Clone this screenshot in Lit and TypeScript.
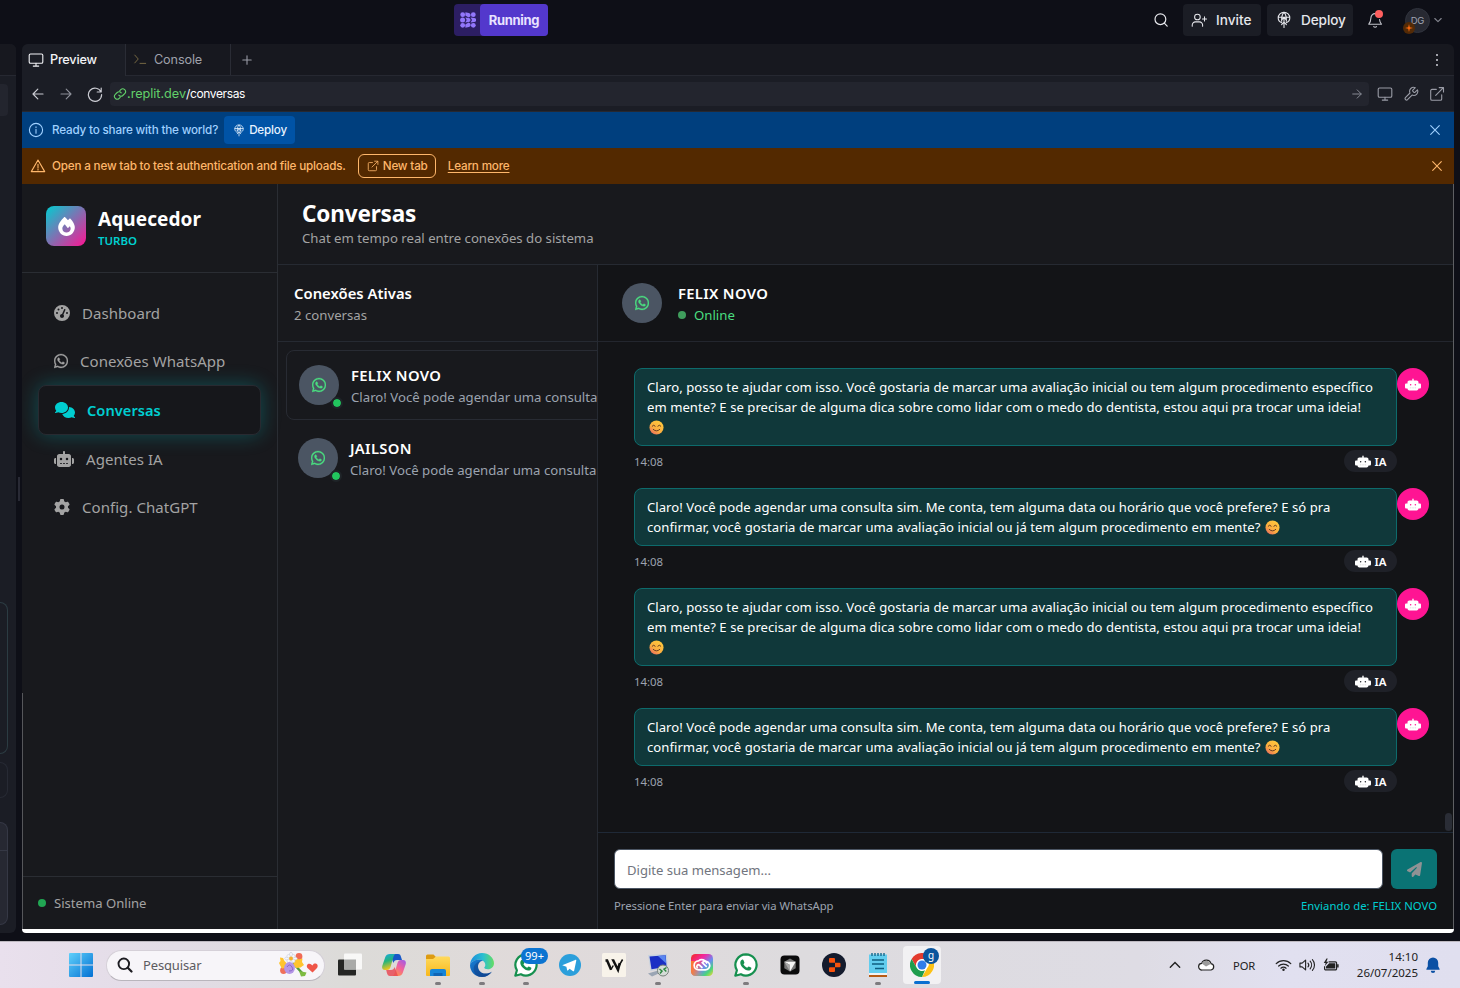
import { LitElement, html, svg, css, nothing } from "lit";
import { customElement, property } from "lit/decorators.js";

type Glyph = { box: string; body: unknown; line?: boolean };

const WHATSAPP = svg`<path stroke="currentColor" stroke-width="10" d="M380.9 97.1C339 55.1 283.2 32 223.9 32c-122.4 0-222 99.6-222 222 0 39.1 10.2 77.3 29.6 111L0 480l117.7-30.9c32.4 17.7 68.9 27 106.1 27h.1c122.3 0 224.1-99.6 224.1-222 0-59.3-25.2-115-67.1-157zm-157 341.6c-33.2 0-65.7-8.9-94-25.7l-6.7-4-69.8 18.3L72 359.2l-4.4-7c-18.5-29.4-28.2-63.3-28.2-98.2 0-101.7 82.8-184.5 184.6-184.5 49.3 0 95.6 19.2 130.4 54.1 34.8 34.9 56.2 81.2 56.1 130.5 0 101.8-84.9 184.6-186.6 184.6zm101.2-138.2c-5.5-2.8-32.8-16.2-37.9-18-5.1-1.9-8.8-2.8-12.5 2.8-3.7 5.6-14.3 18-17.6 21.8-3.2 3.7-6.5 4.2-12 1.4-32.6-16.3-54-29.1-75.5-66-5.7-9.8 5.7-9.1 16.3-30.3 1.8-3.7.9-6.9-.5-9.7-1.4-2.8-12.5-30.1-17.1-41.2-4.5-10.8-9.1-9.3-12.5-9.5-3.2-.2-6.9-.2-10.6-.2-3.7 0-9.7 1.4-14.8 6.9-5.1 5.6-19.4 19-19.4 46.3 0 27.3 19.9 53.7 22.6 57.4 2.8 3.7 39.1 59.7 94.8 83.8 35.2 15.2 49 16.5 66.6 13.9 10.7-1.6 32.8-13.4 37.4-26.4 4.6-13 4.6-24.1 3.2-26.4-1.3-2.5-5-3.9-10.5-6.6z"/>`;

const WA_TASK = svg`<path fill="#fff" d="M12 1.5A10.4 10.4 0 0 0 3 17.2L1.5 22.5 7 21A10.4 10.4 0 1 0 12 1.5z"/><path fill="none" stroke="#16904f" stroke-width="2.2" stroke-linejoin="round" d="M12 1.3A10.6 10.6 0 0 0 2.900 17.300L1.300 22.700 6.900 21.200A10.600 10.600 0 1 0 12 1.300z"/><path fill="#16904f" d="M8.4 6.600c.6 0 .9.1 1.200.8l.8 2c.2.6-.8 1.500-1 1.900.8 1.500 2 2.700 3.700 3.400.5-.3 1.200-1.500 1.700-1.300l2.200 1.100c.5.300.4.900.2 1.500-.5 1.200-1.900 1.700-3 1.600-3.700-.5-7.700-4.300-7.900-7.600 0-1.300.7-3.200 2.100-3.400z"/>`;

const GLYPHS: Record<string, Glyph> = {
  fire: { box: "0 0 448 512", body: svg`<path d="M159.3 5.4c7.8-7.3 19.9-7.2 27.7 .1c27.6 25.9 53.5 53.8 77.7 84c11-14.4 23.5-30.1 37-42.9c7.9-7.4 20.1-7.4 28 .1c34.6 33 63.9 76.6 84.5 118c20.3 40.8 33.8 82.5 33.8 111.9C448 404.2 348.2 512 224 512C98.4 512 0 404.1 0 276.5c0-38.4 17.8-85.3 45.4-131.7C73.3 97.7 112.7 48.6 159.3 5.4zM225.7 416c25.3 0 47.7-7 68.8-21c42.1-29.4 53.4-88.2 28.1-134.4c-4.5-9-16-9.6-22.5-2l-25.2 29.3c-6.6 7.6-18.5 7.4-24.7-.5c-16.5-21-46-58.5-62.8-79.8c-6.3-8-18.3-8.1-24.7-.1c-33.8 42.5-50.8 69.3-50.8 99.4C112 375.4 162.6 416 225.7 416z"/>` },
  gauge: { box: "0 0 512 512", body: svg`<path d="M0 256a256 256 0 1 1 512 0A256 256 0 1 1 0 256zM288 96a32 32 0 1 0 -64 0 32 32 0 1 0 64 0zM256 416c35.3 0 64-28.7 64-64c0-17.4-6.9-33.1-18.1-44.6L366 161.7c5.3-12.1-.2-26.3-12.3-31.6s-26.3 .2-31.6 12.3L257.9 288c-.6 0-1.3 0-1.9 0c-35.3 0-64 28.7-64 64s28.7 64 64 64zM176 144a32 32 0 1 0 -64 0 32 32 0 1 0 64 0zM96 288a32 32 0 1 0 0-64 32 32 0 1 0 0 64zm352-32a32 32 0 1 0 -64 0 32 32 0 1 0 64 0z"/>` },
  whatsapp: { box: "0 0 448 512", body: WHATSAPP },
  comments: { box: "0 0 640 512", body: svg`<path d="M208 352c114.9 0 208-78.8 208-176S322.9 0 208 0S0 78.8 0 176c0 38.6 14.7 74.3 39.6 103.4c-3.5 9.4-8.7 17.7-14.2 24.7c-4.8 6.2-9.7 11-13.3 14.3c-1.8 1.6-3.3 2.9-4.3 3.7c-.5 .4-.9 .7-1.1 .8l-.2 .2 0 0 0 0C1 327.2-1.4 334.4 .8 340.9S9.1 352 16 352c21.8 0 43.8-5.6 62.1-12.5c9.2-3.5 17.8-7.4 25.3-11.4C134.1 343.3 169.8 352 208 352zM448 176c0 112.3-99.1 196.9-216.5 207C255.8 457.4 336.4 512 432 512c38.2 0 73.9-8.7 104.7-23.9c7.5 4 16 7.9 25.2 11.4c18.3 6.9 40.3 12.5 62.1 12.5c6.9 0 13.1-4.5 15.2-11.1c2.1-6.6-.2-13.8-5.8-17.9l0 0 0 0-.2-.2c-.2-.2-.6-.4-1.1-.8c-1-.8-2.5-2-4.3-3.7c-3.6-3.3-8.5-8.1-13.3-14.3c-5.5-7-10.7-15.4-14.2-24.7c24.9-29 39.6-64.7 39.6-103.4c0-92.8-84.9-168.9-192.6-175.5c.4 5.1 .6 10.3 .6 15.5z"/>` },
  robot: { box: "0 0 640 512", body: svg`<path d="M320 0c17.7 0 32 14.3 32 32l0 64 120 0c39.8 0 72 32.2 72 72l0 272c0 39.8-32.2 72-72 72l-304 0c-39.8 0-72-32.2-72-72l0-272c0-39.8 32.2-72 72-72l120 0 0-64c0-17.7 14.3-32 32-32zM208 384c-8.8 0-16 7.2-16 16s7.2 16 16 16l32 0c8.8 0 16-7.2 16-16s-7.2-16-16-16l-32 0zm96 0c-8.8 0-16 7.2-16 16s7.2 16 16 16l32 0c8.8 0 16-7.2 16-16s-7.2-16-16-16l-32 0zm96 0c-8.8 0-16 7.2-16 16s7.2 16 16 16l32 0c8.8 0 16-7.2 16-16s-7.2-16-16-16l-32 0zM264 256a40 40 0 1 0 -80 0 40 40 0 1 0 80 0zm152 40a40 40 0 1 0 0-80 40 40 0 1 0 0 80zM48 224l16 0 0 192-16 0c-26.5 0-48-21.5-48-48l0-96c0-26.5 21.5-48 48-48zm544 0c26.5 0 48 21.5 48 48l0 96c0 26.5-21.5 48-48 48l-16 0 0-192 16 0z"/>` },
  robotSmall: { box: "0 0 640 512", body: svg`<path d="M320 20c16 0 28 12 28 28v52h120c40 0 72 32 72 72v248c0 40-32 72-72 72H172c-40 0-72-32-72-72V172c0-40 32-72 72-72h120V48c0-16 12-28 28-28zM256 262a30 30 0 1 0-60 0 30 30 0 1 0 60 0zm158 30a30 30 0 1 0 0-60 30 30 0 1 0 0 60zM50 220h64v200H50c-28 0-50-22-50-50v-100c0-28 22-50 50-50zm540 0c28 0 50 22 50 50v100c0 28-22 50-50 50h-64V220z"/><path fill="#888" opacity=".35" d="M195 372h60v32h-60zM290 372h60v32h-60zM385 372h60v32h-60z"/>` },
  gear: { box: "0 0 512 512", body: svg`<path d="M495.9 166.6c3.2 8.7 .5 18.4-6.4 24.6l-43.3 39.4c1.1 8.3 1.7 16.8 1.7 25.4s-.6 17.1-1.7 25.4l43.3 39.4c6.9 6.2 9.6 15.9 6.4 24.6c-4.4 11.9-9.7 23.3-15.8 34.3l-4.7 8.1c-6.6 11-14 21.4-22.1 31.2c-5.9 7.2-15.7 9.6-24.5 6.8l-55.7-17.7c-13.4 10.3-28.2 18.9-44 25.4l-12.5 57.1c-2 9.1-9 16.3-18.2 17.8c-13.8 2.3-28 3.5-42.5 3.5s-28.7-1.2-42.5-3.5c-9.2-1.5-16.2-8.7-18.2-17.8l-12.5-57.1c-15.8-6.5-30.6-15.1-44-25.4L83.1 425.9c-8.8 2.8-18.6 .3-24.5-6.8c-8.1-9.8-15.5-20.2-22.1-31.2l-4.7-8.1c-6.1-11-11.4-22.4-15.8-34.3c-3.2-8.7-.5-18.4 6.4-24.6l43.3-39.4C64.6 273.1 64 264.6 64 256s.6-17.1 1.7-25.4L22.4 191.2c-6.9-6.2-9.6-15.9-6.4-24.6c4.4-11.9 9.7-23.3 15.8-34.3l4.7-8.1c6.6-11 14-21.4 22.1-31.2c5.9-7.2 15.7-9.6 24.5-6.8l55.7 17.7c13.4-10.3 28.2-18.9 44-25.4l12.5-57.1c2-9.1 9-16.3 18.2-17.8C227.3 1.2 241.5 0 256 0s28.7 1.2 42.5 3.5c9.2 1.5 16.2 8.7 18.2 17.8l12.5 57.1c15.8 6.5 30.6 15.1 44 25.4l55.7-17.7c8.8-2.8 18.6-.3 24.5 6.8c8.1 9.8 15.5 20.2 22.1 31.2l4.7 8.1c6.1 11 11.4 22.4 15.8 34.3zM256 336a80 80 0 1 0 0-160 80 80 0 1 0 0 160z"/>` },
  plane: { box: "0 0 512 512", body: svg`<path d="M498.1 5.6c10.1 7 15.4 19.1 13.5 31.2l-64 416c-1.5 9.7-7.4 18.2-16 23s-18.9 5.4-28 1.6L284 427.7l-68.5 74.1c-8.9 9.7-22.9 12.9-35.2 8.1S160 493.2 160 480l0-83.6c0-4 1.5-7.8 4.2-10.8L331.8 202.8c5.8-6.3 5.6-16-.4-22s-15.7-6.4-22-.7L106 360.8 17.7 316.6C7.1 311.3 .3 300.7 0 288.9s5.9-22.8 16.1-28.7l448-256c10.7-6.1 23.9-5.5 34 1.4z"/>` },
  search: { box: "0 0 16 16", line: true, body: svg`<circle cx="7.4" cy="7.2" r="5.4"/><path d="M11.3 11.2l2.9 2.9"/>` },
  invite: { box: "0 0 18 16", line: true, body: svg`<circle cx="6.8" cy="4.8" r="3"/><path d="M1.3 14.5v-1.2a3.3 3.3 0 0 1 3.3-3.3H9a3.3 3.3 0 0 1 3.3 3.3v1.2M14.3 4.7v4.4M12.1 6.9h4.4"/>` },
  rocket: { box: "0 0 16 18", line: true, body: svg`<path d="M5.7 11.8C3.4 10.8 2.2 9.1 2.2 7a5.8 5.8 0 0 1 11.6 0c0 2.1-1.2 3.8-3.5 4.8M5.7 10.2C5.4 6.8 6 3.5 8 1.4c2 2.1 2.6 5.4 2.3 8.800M8 6.200V16.500M5.500 9.200L8 6.400l2.500 2.800M5.600 13.600L8 11.200l2.400 2.400M2.400 6.200h11.200"/>` },
  bell: { box: "0 0 16 18", line: true, body: svg`<path d="M8.8 2.7C5.5 2.4 4 4.5 3.900 7c-.1 2.800-.6 4.300-2.100 6.200h12.600c-1.200-1.600-1.700-2.900-1.900-4.700M6.700 15.700c.7.800 2.100.8 2.800 0"/>` },
  chevDown: { box: "0 0 10 10", line: true, body: svg`<path d="M1.8 3.5L5 6.7l3.2-3.2"/>` },
  monitor: { box: "0 0 16 16", line: true, body: svg`<rect x="1.2" y="2" width="13.6" height="9.3" rx="1.3"/><path d="M8 11.3v2.7M5.3 14.1h5.4"/>` },
  prompt: { box: "0 0 16 16", line: true, body: svg`<path d="M2 3.500L6 8l-4 4.500M8 13h6.500"/>` },
  plus: { box: "0 0 12 12", line: true, body: svg`<path d="M6 1.8v8.4M1.8 6h8.4"/>` },
  dots: { box: "0 0 4 14", body: svg`<circle cx="2" cy="2" r="1.1"/><circle cx="2" cy="7" r="1.1"/><circle cx="2" cy="12" r="1.1"/>` },
  left: { box: "0 0 14 14", line: true, body: svg`<path d="M12 7H2.2M6.8 2.2L2 7l4.8 4.8"/>` },
  right: { box: "0 0 14 14", line: true, body: svg`<path d="M2 7h9.8M7.2 2.2L12 7l-4.8 4.8"/>` },
  reload: { box: "0 0 16 16", line: true, body: svg`<path d="M14.2 2v4h-4M14 6A6.6 6.6 0 1 0 14.6 8.6"/>` },
  link: { box: "0 0 14 14", line: true, body: svg`<path d="M5.8 8.2a2.7 2.7 0 0 0 4 .3l1.9-1.9a2.7 2.7 0 0 0-3.9-3.9l-1 1M8.2 5.8a2.7 2.7 0 0 0-4-.3L2.3 7.4a2.7 2.7 0 0 0 3.9 3.9l1-1"/>` },
  wrench: { box: "0 0 16 16", line: true, body: svg`<path d="M9.8 4.2a.7.7 0 0 0 0 1l1.1 1.1a.7.7 0 0 0 1 0l2.5-2.5a4 4 0 0 1-5.3 5.3l-4.6 4.6a1.5 1.5 0 0 1-2.1-2.1L7 7a4 4 0 0 1 5.3-5.3z"/>` },
  open: { box: "0 0 16 16", line: true, body: svg`<path d="M12.7 8.8v4.2a1.3 1.3 0 0 1-1.3 1.3H3a1.3 1.3 0 0 1-1.3-1.3V4.7A1.3 1.3 0 0 1 3 3.4h4.3M10.2 1.6h4.3v4.3M6.7 9.4l7.7-7.7"/>` },
  info: { box: "0 0 16 16", line: true, body: svg`<circle cx="8" cy="8" r="6.6"/><path d="M8 7.4v3.8M8 4.7v.7"/>` },
  warn: { box: "0 0 16 16", line: true, body: svg`<path d="M8 2L1.3 13.6h13.4zM8 6.2v3.7M8 11.3v.7"/>` },
  close: { box: "0 0 12 12", line: true, body: svg`<path d="M1.7 1.7l8.600 8.600M10.300 1.700l-8.600 8.600"/>` },
  spinner: { box: "0 0 16 16", body: svg`<circle cx="2.7" cy="2.7" r="2.4"/><circle cx="2.6" cy="8" r="2.500"/><circle cx="2.7" cy="13.3" r="2.4"/><path d="M5.400.3l3.400.6a2.300 2.300 0 0 1 1.100 3.900L8.600 5.600 5.300 3.400zM5.300 5.600l3.300.5A1.900 1.900 0 0 1 8.600 9.900l-3.300.5L6.700 8zM5.400 15.700l3.400-.6a2.300 2.300 0 0 0 1.100-3.900l-1.300-.8-3.300 2.200z"/><circle cx="13.3" cy="2.7" r="2.4"/><path d="M10.600 5.500l3.600.5a2 2 0 0 1 0 4l-3.600.5L12 8z"/><circle cx="13.300" cy="13.300" r="2.400"/>` },
  spark: { box: "0 0 12 12", body: svg`<circle cx="6" cy="6" r="6" fill="#532a06"/><path fill="#ff6a10" d="M6 2l.8 3.2L10 6l-3.200.8L6 10l-.8-3.200L2 6l3.200-.8z"/>` },
  smile: { box: "0 0 16 16", body: svg`<defs><linearGradient id="fc" x1=".8" y1=".1" x2=".2" y2=".95"><stop offset="0" stop-color="#ffc83c"/><stop offset=".6" stop-color="#fbae40"/><stop offset="1" stop-color="#e8705c"/></linearGradient></defs><circle cx="8" cy="8" r="7.5" fill="url(#fc)"/><path fill="none" stroke="#5b3420" stroke-width="1" stroke-linecap="round" d="M3.400 6.500q1.600-2.200 3.200 0M9.400 6.500q1.600-2.200 3.200 0M4.600 10.100q3.400 3.200 6.800 0"/>` },
  windows: { box: "0 0 24 24", body: svg`<defs><linearGradient id="wn" x1="0" y1="0" x2="1" y2="1"><stop offset="0" stop-color="#5fd0fb"/><stop offset="1" stop-color="#0370d3"/></linearGradient></defs><path fill="url(#wn)" d="M1 0h10.500v11.500H0V1a1 1 0 0 1 1-1zM12.500 0H23a1 1 0 0 1 1 1v10.500H12.500zM0 12.500h11.500V24H1a1 1 0 0 1-1-1zM12.500 12.500H24V23a1 1 0 0 1-1 1H12.500z"/>` },
  lens: { box: "0 0 16 16", body: svg`<circle cx="6.8" cy="6.8" r="5.3" fill="none" stroke="#1d1d22" stroke-width="1.900"/><path stroke="#1d1d22" stroke-width="2.2" stroke-linecap="round" d="M10.8 10.8l3.7 3.7"/>` },
  flowers: { box: "0 0 40 26", body: svg`<path stroke="#4f9a3a" stroke-width="2.500" d="M14 11l10 11"/><path fill="#7dbb42" d="M20 19l7.500 1.500L26 24l-4 .5z"/><circle cx="20" cy="4.500" r="3.400" fill="#f06a55"/><circle cx="4.500" cy="18.500" r="3.400" fill="#f0705a"/><path fill="#ffc42e" d="M1 5.500l3 .5 1.500 3 2 2-1.500 5-3 .5L1.500 14 0 11l1.500-2zM15 8.500l2-2.500 3 1.500 3.500-1-.5 3.500 2 3-3.500 2.500-4 .5-3.500-2.500z"/><g fill="#f6f6fb" stroke="#bfc2d0" stroke-width=".5"><ellipse cx="12" cy="3" rx="1.500" ry="2.800"/><ellipse cx="12" cy="10" rx="1.500" ry="2.800"/><ellipse cx="8.500" cy="6.500" rx="2.800" ry="1.500"/><ellipse cx="15.500" cy="6.500" rx="2.800" ry="1.500"/><circle cx="9.600" cy="4.200" r="1.700"/><circle cx="14.400" cy="4.200" r="1.700"/><circle cx="9.600" cy="8.900" r="1.700"/><circle cx="14.400" cy="8.900" r="1.700"/></g><circle cx="12" cy="6.500" r="1.900" fill="#f4b22d"/><ellipse cx="10.500" cy="16" rx="5.400" ry="6" fill="#b596e6"/><path fill="none" stroke="#8a68c6" d="M8 15q2.500-4 5 0t-3 4"/><path fill="#ef5548" d="M33.500 20.500l-5-4.500c-2-3 1-5.500 3.500-3.800l1.300 1.300 1.500-1.700c3-1.300 5 1.500 3.200 4.200z"/>` },
  taskview: { box: "0 0 24 24", body: svg`<rect x="0" y="6.500" width="18" height="16" rx="1" fill="#252624"/><rect x="6" y=".5" width="18" height="16" rx="1" fill="#f8f8f7"/><path fill="#a9aaa8" d="M6 6.500h12v10H6z"/>` },
  copilot: { box: "0 0 24 24", body: svg`<defs><linearGradient id="ca" x1="0" y1="0" x2=".3" y2="1"><stop offset="0" stop-color="#18a9e8"/><stop offset=".5" stop-color="#25b47c"/><stop offset="1" stop-color="#f2c51b"/></linearGradient><linearGradient id="cb" x1="1" y1="0" x2=".4" y2="1"><stop offset="0" stop-color="#9a5bee"/><stop offset=".55" stop-color="#f2619b"/><stop offset="1" stop-color="#fb9050"/></linearGradient></defs><path fill="#1758c8" d="M8 1h8c2 0 2.600 1.200 3.200 3.400L20 7h-5c-2 0-3 1-3.600 3z"/><path fill="url(#ca)" d="M8 1h5.500c-1.300.6-1.800 2-2.400 4L8.700 13.500C8 16 7 17 4.800 17H3c-2.600 0-3.400-2-2.600-4.500L3.300 4C4 2 5.500 1 8 1z"/><path fill="url(#cb)" d="M16 23h-5.500c1.300-.6 1.800-2 2.400-4l2.400-8.500C16 8 17 7 19.200 7H21c2.600 0 3.400 2 2.600 4.500L20.700 20c-.7 2-2.200 3-4.700 3z"/><path fill="#e94b56" d="M16 23H8c-2 0-2.600-1.200-3.200-3.400L4.200 17H9c2 0 3-1 3.600-3z" opacity=".85"/>` },
  folder: { box: "0 0 24 24", body: svg`<defs><linearGradient id="fo" x1="0" y1="0" x2="0" y2="1"><stop offset="0" stop-color="#ffda5c"/><stop offset="1" stop-color="#f8b81d"/></linearGradient></defs><path fill="#dd9b12" d="M0 3a1.500 1.500 0 0 1 1.500-1.500h6L10 4v3H0z"/><path fill="url(#fo)" d="M0 6h7l3-2.500h12.500A1.500 1.500 0 0 1 24 5v17a1 1 0 0 1-1 1H1a1 1 0 0 1-1-1z"/><path fill="#1686d9" d="M4 18a2 2 0 0 1 2-2h12a2 2 0 0 1 2 2v5H4z"/><path fill="#0f65b5" d="M7.500 20h9v3h-9z"/>` },
  edge: { box: "0 0 24 24", body: svg`<defs><linearGradient id="ea" x1="0" y1=".3" x2="1" y2=".3"><stop offset="0" stop-color="#1b8bdc"/><stop offset=".55" stop-color="#2bbfd0"/><stop offset="1" stop-color="#65dd62"/></linearGradient><linearGradient id="eb" x1="0" y1="0" x2=".8" y2="1"><stop offset="0" stop-color="#1a7fd4"/><stop offset="1" stop-color="#0d4a9c"/></linearGradient></defs><path fill="url(#ea)" d="M0 12C.5 5 5.500 0 12 0c7 0 12 5 12 10.300 0 3.600-2.800 6-6 6-2.500 0-4-.9-3.800-1.700.2-.6 1.100-1 1.100-2.700C15.300 9 12.600 6.800 9 6.800 4.500 6.800 1 9.300 0 12z"/><path fill="url(#eb)" d="M0 12c1-3.200 4.600-5.200 9-5.200 1.800 0 3 .4 4 1-3 .3-5 2.600-5 5.700 0 4 3.300 7.100 7.200 7.100 2.900 0 5-.7 6.900-2.100C20 22 16.300 24 12 24 5 24 0 18.500 0 12z"/><path fill="#123f86" d="M9 24c-3.500-1.500-5.500-5-5.200-9C4 11.500 7.500 8.500 11 8.200 9 9.300 8 11.300 8 13.500c0 4 3.300 7.100 7.200 7.100 2.500 0 4.200-.4 6-1.500C18.500 23 13.500 25 9 24z" opacity=".45"/>` },
  waTask: { box: "0 0 24 24", body: WA_TASK },
  telegram: { box: "0 0 24 24", body: svg`<circle cx="12" cy="12" r="11" fill="#2b9fdb"/><path fill="#fff" d="M4.800 11.900l12.400-5c.9-.3 1.300.2 1 1.200l-2 9.400c-.2.900-.8 1-1.500.6l-3.100-2.300-1.700 1.600c-.5.400-.7.200-.8-.4l-.7-3.300-3.500-1.100c-.6-.2-.6-.5-.1-.7zm4.300 1l6.300-4.200-5 5z"/>` },
  wapp: { box: "0 0 24 24", body: svg`<rect width="24" height="24" rx="1.500" fill="#f8f3ea"/><path fill="none" stroke="#111" stroke-width="2.500" d="M3.500 7.500h1.600l4 9.200M12.300 7.500h-1l4.700 9.200 1.800-6.500"/><path fill="none" stroke="#111" stroke-width="1.500" d="M9 16.500l2.300-4M17.400 12l3.200-5.500"/>` },
  rdp: { box: "0 0 24 24", body: svg`<path fill="#9aa5b4" d="M2 20.500l10-3 3 2-9 4z"/><path fill="#c8d2df" d="M2 2L21 .8l.8 14L4.500 18z"/><path fill="#1a2fc4" d="M3.500 3.500L19.800 2.300l.7 11.500L5.500 16.300z"/><path fill="#5a86f0" d="M12 2.900l7.500-.6.5 8z"/><circle cx="17" cy="17.500" r="5.500" fill="#d5dcd7" stroke="#77817b"/><path fill="none" stroke="#2e8741" stroke-width="1.500" d="M13.500 16l2.500 2-2 2.500M20.500 14.500l-2.500 1.700 2.300 2.300"/>` },
  adobe: { box: "0 0 24 24", body: svg`<defs><linearGradient id="ad" x1="0" y1="0" x2="1" y2="1"><stop offset="0" stop-color="#f5281f"/><stop offset=".35" stop-color="#f12aa5"/><stop offset=".6" stop-color="#6a8df2"/><stop offset=".8" stop-color="#4bd67c"/><stop offset="1" stop-color="#f7d62c"/></linearGradient><linearGradient id="ae" x1="0" y1="0" x2="1" y2="0"><stop offset="0" stop-color="#ff8a20"/><stop offset="1" stop-color="#ffb020" stop-opacity="0"/></linearGradient></defs><rect x="1" y="1" width="22" height="22" rx="4.500" fill="url(#ad)"/><path fill="url(#ae)" d="M1 8h12v15H5.500A4.500 4.500 0 0 1 1 18.500z" opacity=".85"/><path fill="none" stroke="#fff" stroke-width="1.700" stroke-linecap="round" d="M15.500 16.800H8.800a4.500 4.500 0 0 1-.3-9M12 14.500l-2.500-2.300c-1.500-1.300-3.600 1-2.300 2.500M8.600 7.800c3-2.500 6.800-.6 8 2.200M15.500 16.800a4.300 4.300 0 1 0-3.200-7.200l3.900 3.800"/>` },
  cursor: { box: "0 0 24 24", body: svg`<rect x="2.500" y="2.500" width="19" height="19" rx="4" fill="#0b0b0c"/><path fill="#777" d="M12 5.500l5.700 3.200v6.600L12 18.500l-5.700-3.200V8.700z"/><path fill="#f5f5f5" d="M6.300 8.700h11.400L12 18.500V12z"/><path fill="#aaa" d="M6.300 8.700L12 12v6.500z"/>` },
  replit: { box: "0 0 24 24", body: svg`<circle cx="12" cy="12" r="12" fill="#141b2d"/><path fill="#f9520d" d="M7 6a1 1 0 0 1 1-1h4a1 1 0 0 1 1 1v3.700H8a1 1 0 0 1-1-1zM13 9.700h4.500a1 1 0 0 1 1 1v2.600a1 1 0 0 1-1 1H13zM7 15.300a1 1 0 0 1 1-1h5V18a1 1 0 0 1-1 1H8a1 1 0 0 1-1-1z"/>` },
  notepad: { box: "0 0 24 24", body: svg`<path fill="#62cdee" d="M3 1.500h18V20H3z"/><path fill="#f1f3f4" d="M3 20h18v2.300H3z"/><path fill="#b75b14" d="M3 22h18v2H3z"/><path stroke="#1d6f92" stroke-width="1.500" d="M6 0v3M9 0v3M12 0v3M15 0v3M18 0v3"/><path stroke="#0f5d80" stroke-width="1.500" d="M6 7h12M6 11h12M9 15.500h9"/>` },
  chrome: { box: "0 0 24 24", body: svg`<circle cx="12" cy="12" r="12" fill="#fff"/><path fill="#e33b2e" d="M1.600 6A12 12 0 0 1 22.400 6H12a6 6 0 0 0-5.200 9z"/><path fill="#fbc116" d="M22.400 6A12 12 0 0 1 12 24l5.200-9A6 6 0 0 0 16.500 6z"/><path fill="#1f9d4d" d="M12 24A12 12 0 0 1 1.600 6l5.200 9A6 6 0 0 0 15 17.200z"/><circle cx="12" cy="12" r="5.500" fill="#fff"/><circle cx="12" cy="12" r="4.500" fill="#2f7de9"/>` },
  chevUp: { box: "0 0 12 12", body: svg`<path fill="none" stroke="#222" stroke-width="1.400" stroke-linecap="round" d="M1.300 8.300L6 3.500l4.700 4.800"/>` },
  cloud: { box: "0 0 18 14", body: svg`<path fill="#fff" stroke="#222" stroke-width="1.300" d="M4.500 12.300a3.500 3.500 0 0 1-.6-7 5.200 5.200 0 0 1 9.900.3 3.400 3.400 0 0 1 0 6.700z"/><path fill="#9b9b9b" d="M4 5.500a5 5 0 0 1 9.400.4L8.500 8.500z"/>` },
  wifi: { box: "0 0 18 14", body: svg`<path fill="none" stroke="#222" stroke-width="1.300" stroke-linecap="round" d="M1.300 5.500a10.800 10.800 0 0 1 15.400 0M3.900 8.100a7.200 7.200 0 0 1 10.200 0M6.300 10.400a3.800 3.800 0 0 1 5.400 0"/><circle cx="9" cy="12" r="1.300" fill="#222"/>` },
  volume: { box: "0 0 18 14", body: svg`<path fill="none" stroke="#222" stroke-width="1.200" stroke-linejoin="round" stroke-linecap="round" d="M1 5v4h2.300L7 12.200V1.800L3.300 5zM9.500 5a3 3 0 0 1 0 4M11.800 3a6 6 0 0 1 0 8M14.200 1.300a8.500 8.500 0 0 1 0 11.400"/>` },
  battery: { box: "0 0 17 14", body: svg`<path fill="none" stroke="#222" stroke-width="1.300" d="M6 3.700h7.200a1.200 1.200 0 0 1 1.200 1.200v6a1.200 1.200 0 0 1-1.200 1.200H2.900a1.200 1.200 0 0 1-1.200-1.200V8.200"/><path fill="#222" d="M6.500 5.200H13v5.400H3.200V8.500zM15 6.200h1.600v3.400H15zM3.700 0L.8 4.800h2L2 8l3.800-4.500H3.600L5 0z"/>` },
  bellFill: { box: "0 0 14 16", body: svg`<path fill="#0b50a4" d="M7 .5a5.200 5.200 0 0 0-5.200 5.200v3.500L.4 12v.8h13.200V12l-1.400-2.800V5.700A5.200 5.200 0 0 0 7 .5zM4.800 13.700h4.400a2.200 2.200 0 0 1-4.400 0z"/>` },
};

@customElement("ui-icon")
class UiIcon extends LitElement {
  @property() name = "";
  @property({ type: Number }) w = 16;
  @property({ type: Number }) h = 16;
  @property({ type: Number }) stroke = 1.1;
  static styles = css`
    :host { display: inline-flex; flex: none; }
    svg { display: block; fill: currentColor; }
    svg.line { fill: none; stroke: currentColor; stroke-linecap: round; stroke-linejoin: round; }
  `;
  render() {
    const g = GLYPHS[this.name];
    if (!g) return nothing;
    return html`<svg class=${g.line ? "line" : ""} width=${this.w} height=${this.h} viewBox=${g.box} stroke-width=${g.line ? this.stroke : nothing}>${g.body}</svg>`;
  }
}

const ic = (name: string, w: number, h = w, stroke = 1.1) =>
  html`<ui-icon name=${name} .w=${w} .h=${h} .stroke=${stroke}></ui-icon>`;

@customElement("warmer-app")
class WarmerApp extends LitElement {
  static styles = css`
    :host { display: flex; min-height: 0; min-width: 0; flex: 1; background: #18191d; color: #fff; font-family: "Noto Sans", "Open Sans", sans-serif; font-size: 15px; }
    * { box-sizing: border-box; }
    .row { display: flex; align-items: center; white-space: nowrap; }
    .side { width: 256px; flex: none; display: flex; flex-direction: column; border-right: 1px solid #2a2d33; }
    .brand { height: 89px; padding: 0 24px 4px; gap: 12px; border-bottom: 1px solid #2a2d33; }
    .logo { width: 40px; height: 40px; border-radius: 8px; background: linear-gradient(135deg, #00ced1, #ff1493); display: grid; place-items: center; }
    .name { font-size: 19px; line-height: 28px; font-weight: 700; letter-spacing: .08px; }
    .turbo { font-size: 11.5px; line-height: 15px; font-weight: 600; color: #00d0d0; letter-spacing: -.05px; }
    .nav { padding: 16px; flex: 1; }
    .item { height: 48px; padding: 0 16px; gap: 12px; color: #a3a3a3; font-size: 15px; letter-spacing: .05px; }
    .item.on { height: 50px; border: 1px solid #282a31; border-radius: 8px; background: #16171b; color: #00ced1; font-weight: 600; font-size: 14.6px; box-shadow: 0 0 20px rgba(0, 206, 209, .3); }
    .foot { height: 53px; padding: 0 16px; gap: 8px; border-top: 1px solid #2a2d33; font-size: 13.1px; color: #a3a3a3; }
    .dot { width: 8px; height: 8px; border-radius: 50%; background: #21a653; flex: none; }
    .main { flex: 1; display: flex; flex-direction: column; min-width: 0; }
    .head { height: 81px; padding: 14px 24px 0; border-bottom: 1px solid #262a32; }
    .h1 { font-size: 22.5px; line-height: 32px; font-weight: 700; letter-spacing: -.15px; white-space: nowrap; }
    .sub { font-size: 13.2px; line-height: 20px; color: #a3a3a3; white-space: nowrap; }
    .head .sub { margin-top: -2px; }
    .cols { flex: 1; display: flex; min-height: 0; }
    .list { width: 320px; flex: none; border-right: 1px solid #262a32; overflow: hidden; }
    .list-head { height: 77px; padding: 16px 16px 0; border-bottom: 1px solid #262a32; }
    .strong { font-size: 14.8px; line-height: 24px; font-weight: 600; letter-spacing: .03px; white-space: nowrap; }
    .caps { letter-spacing: .3px; }
    .cards { padding: 8px; display: flex; flex-direction: column; gap: 6px; }
    .card { width: 420px; padding: 12px; gap: 12px; height: 64px; border-radius: 8px; }
    .card.on { height: 70px; border: 1px solid #282b33; }
    .ava { position: relative; width: 40px; height: 40px; border-radius: 50%; background: #4b5563; color: #4ade80; display: grid; place-items: center; flex: none; }
    .live { position: absolute; right: -4px; bottom: -4px; width: 12px; height: 12px; border-radius: 50%; background: #22c55e; border: 2px solid #1f2428; background-clip: padding-box; }
    .card .sub { color: #9ca3af; }
    .chat { flex: 1; min-width: 0; background: #131417; display: flex; flex-direction: column; }
    .chat-head { height: 77px; padding: 0 24px; gap: 16px; border-bottom: 1px solid #23262e; }
    .status { gap: 8px; font-size: 13.2px; line-height: 20px; color: #4ade80; }
    .status .dot { background: #3f9d5c; }
    .feed { flex: 1; min-height: 0; padding: 26px 1px 0 36px; display: flex; }
    .msgs { flex: 1; min-width: 0; display: flex; flex-direction: column; gap: 16px; }
    .msg { display: flex; align-items: flex-start; }
    .body { width: 763px; flex: none; }
    .bubble { border: 1px solid #0d6b6c; border-radius: 8px; background: #10383a; padding: 8px 12px; font-size: 13.1px; line-height: 20px; letter-spacing: .042px; color: #fff; white-space: nowrap; }
    .line { height: 20px; display: flex; align-items: center; }
    .meta { display: flex; justify-content: space-between; align-items: center; margin-top: 4px; height: 22px; font-size: 11.4px; letter-spacing: -.05px; color: #9ca3af; }
    .badge { display: flex; align-items: center; gap: 4px; height: 22px; width: 53px; justify-content: center; border-radius: 11px; background: #1f2128; color: #fff; font-size: 11.5px; font-weight: 600; }
    .bot { width: 32px; height: 32px; border-radius: 50%; background: #ff1493; display: grid; place-items: center; flex: none; }
    .thumb { width: 7px; height: 18px; border-radius: 4px; background: #2a2d36; align-self: flex-end; margin-bottom: 1px; }
    .emo { margin: 1px 0 0 5px; display: flex; }
    .first { margin-left: 2px; }
    .composer { height: 97px; border-top: 1px solid #1f2937; padding: 16px 16px 0; }
    .field { flex: 1; height: 40px; border: 1px solid #4b5563; border-radius: 6px; background: #fff; color: #71757e; font-size: 13.1px; letter-spacing: -.03px; display: flex; align-items: center; padding: 1px 12px 0; }
    .send { width: 46px; height: 40px; border-radius: 6px; background: #0a7374; color: #8f9294; display: grid; place-items: center; margin-left: 8px; }
    .hint { justify-content: space-between; font-size: 11.3px; letter-spacing: -.04px; line-height: 16px; margin-top: 9px; color: #9ca3af; }
    .from { color: #00ced1; letter-spacing: .02px; }
  `;

  private nav = [
    { icon: "gauge", w: 16, label: "Dashboard" },
    { icon: "whatsapp", w: 14, label: "Conexões WhatsApp" },
    { icon: "comments", w: 20, label: "Conversas", on: true },
    { icon: "robot", w: 20, label: "Agentes IA" },
    { icon: "gear", w: 16, label: "Config. ChatGPT" },
  ];
  private long = ["Claro, posso te ajudar com isso. Você gostaria de marcar uma avaliação inicial ou tem algum procedimento específico", "em mente? E se precisar de alguma dica sobre como lidar com o medo do dentista, estou aqui pra trocar uma ideia!", ""];
  private short = ["Claro! Você pode agendar uma consulta sim. Me conta, tem alguma data ou horário que você prefere? E só pra", "confirmar, você gostaria de marcar uma avaliação inicial ou já tem algum procedimento em mente?"];

  private msg(lines: string[]) {
    return html`<div class="msg">
      <div class="body">
        <div class="bubble">
          ${lines.map((t, i) => html`<div class="line"><span>${t}</span>${i === lines.length - 1 ? html`<span class="emo ${t ? "" : "first"}">${ic("smile", 15)}</span>` : nothing}</div>`)}
        </div>
        <div class="meta"><span>14:08</span><span class="badge">${ic("robotSmall", 16, 13)}<span>IA</span></span></div>
      </div>
      <div class="bot">${ic("robotSmall", 16, 13)}</div>
    </div>`;
  }

  render() {
    return html`
      <aside class="side">
        <div class="brand row">
          <div class="logo">${ic("fire", 17, 19)}</div>
          <div><div class="name">Aquecedor</div><div class="turbo">TURBO</div></div>
        </div>
        <nav class="nav">
          ${this.nav.map((n) => html`<div class="item row ${n.on ? "on" : ""}">${ic(n.icon, n.w, 16)}<span>${n.label}</span></div>`)}
        </nav>
        <div class="foot row"><span class="dot"></span><span>Sistema Online</span></div>
      </aside>
      <section class="main">
        <header class="head"><div class="h1">Conversas</div><div class="sub">Chat em tempo real entre conexões do sistema</div></header>
        <div class="cols">
          <div class="list">
            <div class="list-head"><div class="strong">Conexões Ativas</div><div class="sub">2 conversas</div></div>
            <div class="cards">
              ${["FELIX NOVO", "JAILSON"].map((n, i) => html`<div class="card row ${i ? "" : "on"}">
                <div class="ava">${ic("whatsapp", 14, 16)}<span class="live"></span></div>
                <div><div class="strong caps">${n}</div><div class="sub">Claro! Você pode agendar uma consulta</div></div>
              </div>`)}
            </div>
          </div>
          <div class="chat">
            <div class="chat-head row">
              <div class="ava">${ic("whatsapp", 14, 16)}</div>
              <div><div class="strong caps">FELIX NOVO</div><div class="status row"><span class="dot"></span><span>Online</span></div></div>
            </div>
            <div class="feed">
              <div class="msgs">${[this.long, this.short, this.long, this.short].map((m) => this.msg(m))}</div>
              <div class="thumb"></div>
            </div>
            <div class="composer">
              <div class="row"><div class="field">Digite sua mensagem...</div><div class="send">${ic("plane", 15)}</div></div>
              <div class="hint row"><span>Pressione Enter para enviar via WhatsApp</span><span class="from">Enviando de: FELIX NOVO</span></div>
            </div>
          </div>
        </div>
      </section>`;
  }
}

@customElement("task-bar")
class TaskBar extends LitElement {
  static styles = css`
    :host { display: flex; align-items: center; height: 47px; box-sizing: border-box; border-top: 1px solid #bdb9c0; background: linear-gradient(90deg, #e9e0ed 0, #e2dce6 12%, #dcdbd8 24%, #e0dada 36%, #dddbde 55%, #dedce4 78%, #e1e0f0 88%, #e0dfef 100%); font-family: "Noto Sans", sans-serif; color: #222; padding: 0 20px 0 69px; }
    * { box-sizing: border-box; }
    .pill { width: 219px; height: 31px; border-radius: 16px; background: #f7f5f9; border: 1px solid #d5d0d8; border-bottom-color: #b9b5bc; margin-left: 13px; display: flex; align-items: center; padding: 0 5px 0 10px; font-size: 13px; letter-spacing: -.15px; color: #5c5b60; }
    .pill span { flex: 1; margin-left: 10px; margin-top: -1px; }
    .tv { display: flex; margin-left: 13px; margin-right: 10px; }
    .slot { position: relative; width: 44px; height: 38px; display: grid; place-items: center; border-radius: 4px; flex: none; }
    .slot.run::after { content: ""; position: absolute; bottom: -1px; left: 19px; width: 6px; height: 3px; border-radius: 2px; background: #7d7b7e; }
    .slot.on { width: 38px; margin: 0 3px; background: #f2f1f3; }
    .slot.on::after { content: ""; position: absolute; bottom: 0; left: 11px; width: 16px; height: 3px; border-radius: 2px; background: #0a6fd0; }
    .num { position: absolute; left: 17px; top: 2px; width: 27px; height: 16px; border-radius: 8px; background: #0b74d1; color: #fff; font-size: 11px; line-height: 16px; text-align: center; }
    .who { position: absolute; right: 2px; top: 2px; width: 16px; height: 16px; border-radius: 50%; background: #0b559d; color: #fff; font-size: 10px; line-height: 14px; text-align: center; }
    .gap { flex: 1; }
    .tray { display: flex; align-items: center; font-size: 11.2px; }
    .tray span { display: flex; }
    .cloud { margin-left: 17px; }
    .por { margin-left: 18px; width: 24px; letter-spacing: -.1px; padding-top: 1px; }
    .wifi { margin-left: 18px; }
    .vol { margin-left: 7px; }
    .bat { margin-left: 7px; }
    .clock { width: 64px; margin-left: 15px; text-align: right; line-height: 16px; font-size: 11.5px; white-space: nowrap; }
    .ring { margin-left: 8px; }
  `;
  private apps: [string, boolean][] = [["copilot", false], ["folder", true], ["edge", true], ["waTask", true], ["telegram", false], ["wapp", false], ["rdp", true], ["adobe", false], ["waTask", true], ["cursor", false], ["replit", false], ["notepad", true]];
  render() {
    return html`
      ${ic("windows", 24)}
      <div class="pill">${ic("lens", 16)}<span>Pesquisar</span>${ic("flowers", 40, 26)}</div>
      <div class="tv">${ic("taskview", 24)}</div>
      ${this.apps.map(([n, run], i) => html`<div class="slot ${run ? "run" : ""}">${ic(n, 24)}${i === 3 ? html`<span class="num">99+</span>` : nothing}</div>`)}
      <div class="slot on">${ic("chrome", 24)}<span class="who">g</span></div>
      <div class="gap"></div>
      <div class="tray">
        ${ic("chevUp", 12)}<span class="cloud">${ic("cloud", 17, 14)}</span><span class="por">POR</span>
        <span class="wifi">${ic("wifi", 17, 14)}</span><span class="vol">${ic("volume", 17, 14)}</span><span class="bat">${ic("battery", 16, 14)}</span>
        <div class="clock"><div>14:10</div><div>26/07/2025</div></div>
        <span class="ring">${ic("bellFill", 14, 16)}</span>
      </div>`;
  }
}

@customElement("app-root")
class AppRoot extends LitElement {
  static styles = css`
    :host { display: flex; flex-direction: column; width: 1460px; height: 988px; overflow: hidden; background: #0e0f17; color: #e6e7ec; font-family: Inter, sans-serif; font-size: 13px; }
    * { box-sizing: border-box; }
    .row { display: flex; align-items: center; white-space: nowrap; }
    .top { height: 40px; justify-content: space-between; padding-right: 17px; flex: none; }
    .run { height: 32px; margin-left: 454px; border-radius: 4px; background: #2c1e63; color: #9277fb; }
    .run span { height: 32px; width: 68px; margin-left: 4px; border-radius: 4px; background: #5338cc; color: #e9e3ff; font-weight: 700; line-height: 32px; text-align: center; letter-spacing: -.3px; }
    .run ui-icon { margin-left: 6px; }
    .btn { height: 32px; border-radius: 4px; background: #1b1d25; gap: 8px; padding: 0 8px; font-weight: 500; font-size: 13.6px; }
    .invite { width: 78px; margin-left: 14px; }
    .deploy { width: 86px; margin-left: 6px; gap: 9px; padding-left: 9px; letter-spacing: -.1px; }
    .bell { position: relative; margin-left: 14px; color: #c4c5cc; display: flex; }
    .bell i { position: absolute; right: 0; top: -1px; width: 8px; height: 8px; border-radius: 50%; background: #ff5f5f; }
    .me { position: relative; width: 25px; height: 25px; border-radius: 50%; margin-left: 22px; background: #272932; border: 1px solid #30333d; color: #a0a4b2; font-size: 9.5px; line-height: 23px; text-align: center; letter-spacing: -.3px; }
    .me ui-icon { position: absolute; left: -3px; bottom: -2px; }
    .caret { display: flex; margin-left: 3px; color: #84868f; }
    .work { flex: 1; display: flex; min-height: 0; padding: 4px 0 8px; }
    .left { width: 16px; flex: none; background: #1b1d25; border-radius: 0 6px 6px 0; display: flex; flex-direction: column; overflow: hidden; }
    .l-tabs { height: 32px; flex: none; background: #17181f; border-bottom: 1px solid #262831; }
    .l-field { width: 8px; height: 32px; margin-top: 8px; background: #23252e; border-radius: 0 4px 4px 0; }
    .l-box { width: 8px; border: 1px solid #2c3c43; border-left: 0; border-radius: 0 8px 8px 0; }
    .l-a { height: 152px; margin-top: 486px; }
    .l-b { height: 36px; margin-top: 8px; border-color: #272a34; }
    .l-c { height: 103px; margin-top: 24px; border-color: #353845; background: #262832; padding-top: 27px; }
    .l-c i { display: block; height: 1px; background: #353845; }
    .grip { width: 6px; flex: none; display: flex; align-items: center; padding: 0 2px; }
    .grip i { width: 2px; height: 24px; background: #292a35; }
    .pane { width: 1432px; flex: none; display: flex; flex-direction: column; border-radius: 6px 6px 4px 4px; overflow: hidden; }
    .strip { height: 4px; background: #fff; flex: none; }
    .tabs { height: 32px; background: #17181f; flex: none; border-bottom: 1px solid #262831; align-items: stretch; }
    .tab { gap: 6px; padding: 0 0 1px 6px; border-right: 1px solid #2a2c35; color: #9fa1ab; font-size: 12.7px; }
    .tab.on { width: 104px; background: #1b1d25; color: #f3f4f7; font-weight: 500; margin-bottom: -1px; letter-spacing: -.22px; }
    .tab.two { width: 105px; gap: 7px; padding-left: 7px; letter-spacing: -.15px; }
    .tab.two ui-icon { color: #7a6b45; }
    .add { margin-left: 10px; color: #9a9ca6; }
    .more { margin-left: auto; margin-right: 15px; color: #c4c5cc; }
    .url { height: 36px; flex: none; background: #1b1d25; border-bottom: 1px solid #262831; padding: 0 8px 0 9px; color: #c9cad1; }
    .url .fwd { margin: 0 14px; color: #8d8f99; }
    .addr { height: 24px; width: 1259px; margin-left: 7px; border-radius: 4px; background: #23252e; padding: 0 6px 0 3px; color: #fff; font-size: 12px; }
    .host { color: #62d06a; font-size: 12.7px; letter-spacing: -.03px; }
    .path { letter-spacing: -.38px; }
    .go { margin-left: auto; color: #8d8f99; }
    .tool { color: #9a9ca6; gap: 10px; margin-left: 8px; }
    .note { height: 36px; flex: none; font-size: 11.7px; font-weight: 500; letter-spacing: -.19px; }
    .blue { background: #003f7e; color: #9fd0ff; padding: 0 13px 0 6px; }
    .blue b { font-weight: 500; margin-left: 8px; }
    .ship { height: 28px; width: 71px; border-radius: 4px; background: #0053a6; color: #e6f2ff; margin-left: 6px; padding-left: 9px; gap: 4px; }
    .brown { background: #532900; color: #ffb76b; padding: 0 11px 0 8px; }
    .brown b { font-weight: 500; margin-left: 6px; }
    .newtab { height: 24px; width: 78px; border: 1px solid #ffb76b; border-radius: 6px; margin-left: 12px; padding-left: 8px; gap: 4px; }
    .learn { margin-left: 12px; text-decoration: underline; text-underline-offset: 2px; }
    .x { margin-left: auto; display: flex; }
    .frame { flex: 1; min-height: 0; display: flex; border-right: 1px solid #5e5f63; position: relative; }
    .edge { position: absolute; left: 0; bottom: 0; width: 1px; height: 236px; background: #56575b; }
  `;
  render() {
    return html`
      <header class="top row">
        <div class="run row">${ic("spinner", 16)}<span>Running</span></div>
        <div class="row">
          ${ic("search", 16, 16, 1.2)}
          <div class="btn invite row">${ic("invite", 17, 16)}<span>Invite</span></div>
          <div class="btn deploy row">${ic("rocket", 16, 18)}<span>Deploy</span></div>
          <div class="bell">${ic("bell", 16, 18)}<i></i></div>
          <div class="me">DG${ic("spark", 12)}</div>
          <div class="caret">${ic("chevDown", 10)}</div>
        </div>
      </header>
      <div class="work">
        <div class="left"><div class="l-tabs"></div><div class="l-field"></div><div class="l-box l-a"></div><div class="l-box l-b"></div><div class="l-box l-c"><i></i></div></div>
        <div class="grip"><i></i></div>
        <div class="pane">
          <div class="tabs row">
            <div class="tab on row">${ic("monitor", 16)}<span>Preview</span></div>
            <div class="tab two row">${ic("prompt", 14)}<span>Console</span></div>
            <div class="add row">${ic("plus", 12)}</div>
            <div class="more row">${ic("dots", 4, 14)}</div>
          </div>
          <div class="url row">
            ${ic("left", 14, 14, 1.2)}<span class="fwd row">${ic("right", 14)}</span>${ic("reload", 16, 16, 1.2)}
            <div class="addr row"><span class="host row">${ic("link", 14)}.replit.dev</span><span class="path">/conversas</span><span class="go row">${ic("right", 12)}</span></div>
            <div class="tool row">${ic("monitor", 16)}${ic("wrench", 16)}${ic("open", 16)}</div>
          </div>
          <div class="note blue row">${ic("info", 16)}<b>Ready to share with the world?</b><span class="ship row">${ic("rocket", 12, 13)}<span>Deploy</span></span><span class="x">${ic("close", 12)}</span></div>
          <div class="note brown row">${ic("warn", 16)}<b>Open a new tab to test authentication and file uploads.</b><span class="newtab row">${ic("open", 12)}<span>New tab</span></span><span class="learn">Learn more</span><span class="x">${ic("close", 12)}</span></div>
          <div class="frame"><warmer-app></warmer-app><i class="edge"></i></div>
          <div class="strip"></div>
        </div>
      </div>
      <task-bar></task-bar>`;
  }
}
